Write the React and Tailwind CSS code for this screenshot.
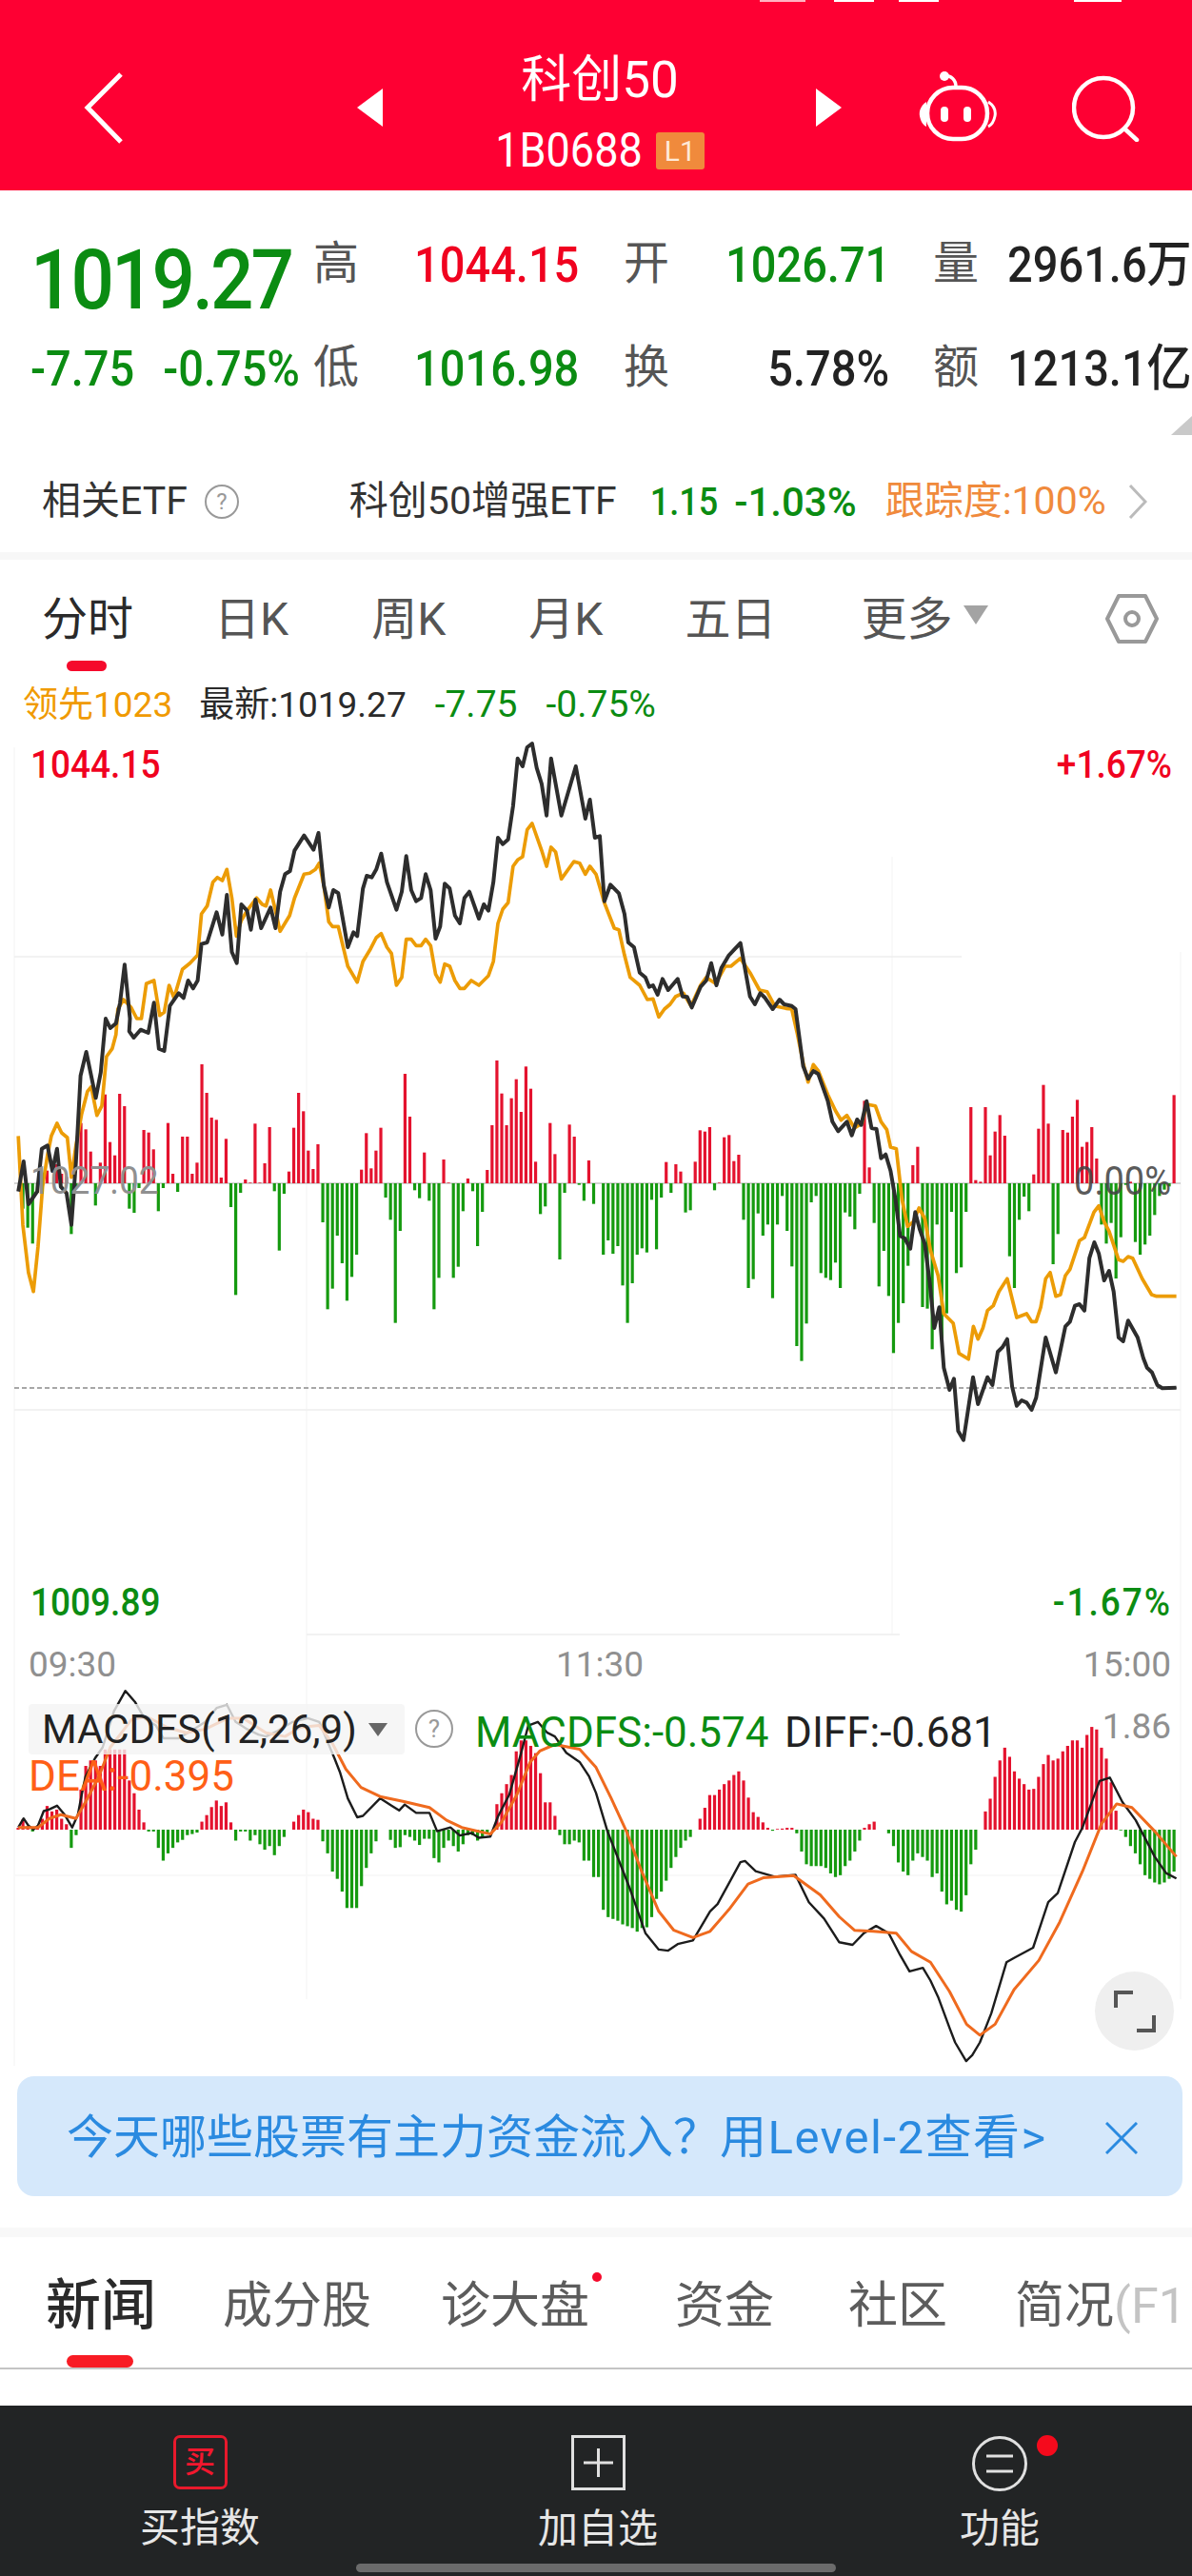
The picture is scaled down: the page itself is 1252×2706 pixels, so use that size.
const vol = [
  0, -80, -140, -190, -30, 5, 40, 0, 60, 30,
  20, -160, -10, 190, 170, 100, -70, 65, 280, 130,
  88, 282, 243, -80, -93, -15, 168, 160, 107, -88,
  -15, 190, 30, -27, 147, 147, 30, 65, 375, 285,
  207, 200, 18, 140, -75, -352, -30, 12, 2, 188,
  2, 63, 177, -25, -212, -33, 37, 175, 285, 227,
  103, 45, 123, -123, -397, -332, -165, -252, -370, -295,
  -225, 43, 158, 47, 103, 175, -45, -115, -440, -150,
  345, 210, -22, -47, 97, -55, -397, -298, 75, 2,
  -298, -263, -88, 15, -25, -198, -90, 42, 183, 387,
  283, 183, 268, 328, 225, 368, 298, 68, -97, -73,
  190, 92, -240, -30, 185, 147, -5, -55, 72, -65,
  0, -225, -180, -222, -198, -322, -440, -315, -225, -205,
  -218, -52, -208, -45, 67, -30, 60, 37, -92, -85,
  68, 167, 163, 177, -22, 2, 145, 152, 70, 90,
  -115, -330, -302, -95, -165, -130, -362, -130, -40, -150,
  -262, -513, -560, -442, -60, -40, -283, -298, -305, -250,
  -330, -92, -105, -145, -33, 260, 50, -125, -325, -213,
  -355, -535, -440, -378, -260, 57, 115, -390, -395, -523,
  -130, -490, -410, -90, -283, -265, -90, 240, 10, 5,
  240, 88, 163, 215, 150, -230, -330, -115, -42, -88,
  28, 172, 310, 188, -255, -160, 168, 160, 210, 263,
  115, 130, 177, 78, -130, -190, -125, -300, -170, -5,
  5, -185, -225, -193, -165, -100, -40, -20, -10, 278,
];

const macd = [
  5, 28, 10, -5, 5, 30, 65, 50, 55, 30,
  15, -50, -15, 110, 175, 190, 190, 175, 220, 220,
  220, 220, 220, 135, 100, 55, 20, -5, -5, -50,
  -85, -65, -50, -35, -28, -15, -12, -8, 22, 40,
  62, 80, 65, 75, 20, -30, -5, -5, -30, -15,
  -40, -55, -45, -70, -45, -20, 0, 22, 40, 55,
  48, 30, 27, -32, -65, -115, -135, -170, -215, -215,
  -215, -155, -105, -65, -32, 0, 0, -28, -50, -48,
  -15, -20, -30, -42, -25, -25, -78, -90, -50, -30,
  -45, -60, -40, -15, -15, -30, -20, -10, 0, 70,
  100, 125, 150, 215, 245, 245, 230, 210, 155, 75,
  75, 38, -15, -40, -40, -30, -35, -85, -85, -130,
  -130, -220, -240, -245, -250, -260, -265, -270, -280, -270,
  -268, -240, -190, -170, -140, -105, -75, -50, -30, -20,
  0, 30, 60, 95, 95, 110, 125, 135, 150, 160,
  135, 88, 48, 35, 20, 5, -3, 2, 3, 5,
  5, -10, -60, -95, -100, -100, -100, -105, -120, -130,
  -125, -100, -85, -60, -30, 5, 15, 22, 0, 0,
  -10, -45, -90, -115, -125, -85, -65, -75, -85, -130,
  -120, -170, -205, -195, -220, -225, -180, -95, -55, 0,
  50, 85, 145, 190, 225, 200, 160, 140, 125, 110,
  112, 145, 180, 205, 190, 195, 215, 230, 245, 245,
  225, 260, 282, 275, 225, 195, 130, 52, -2, -20,
  -45, -65, -95, -125, -135, -145, -150, -145, -135, -115,
];

// traced from crops: x scale 2.505, y scale 3 (price) or 2.613 (macd)
const price = (list, left, top) => list.map(([x, y]) => `${(x / 2.505 + left).toFixed(1)},${(y / 3 + top).toFixed(1)}`).join(" ");
const lower = (list, left) => list.map(([x, y]) => `${(x / 2.505 + left).toFixed(1)},${(y / 2.613 + 1560).toFixed(1)}`).join(" ");

const blackLine = [
  price([[48, 575], [62, 480], [75, 615], [98, 575], [110, 440], [125, 430], [138, 510], [150, 440], [160, 560], [175, 580], [188, 680], [200, 480], [212, 210], [227, 135], [252, 280], [265, 200], [278, 30], [290, 60], [305, 45], [316, -20]], 0, 1060),
  price([[328, 1360], [342, 1530], [340, 1570], [352, 1590], [370, 1565], [390, 1575], [405, 1480], [418, 1625], [432, 1632], [447, 1490], [470, 1450], [483, 1465], [495, 1410], [508, 1435], [520, 1410], [530, 1295], [545, 1290], [570, 1195], [585, 1265], [597, 1140], [610, 1320], [623, 1355], [635, 1170], [650, 1190], [660, 1250], [672, 1155], [687, 1245], [712, 1180], [725, 1245], [737, 1130], [750, 1075], [763, 1065], [775, 1000], [800, 953], [825, 998], [838, 945], [852, 1110], [865, 1180], [877, 1125], [890, 1135], [915, 1305], [930, 1258], [940, 1270], [955, 1120], [965, 1080], [978, 1085], [990, 1060], [1003, 1010], [1018, 1100], [1043, 1187], [1057, 1130], [1069, 1018], [1082, 1125], [1095, 1160], [1108, 1150], [1120, 1075], [1133, 1125], [1146, 1278], [1158, 1240], [1170, 1105], [1183, 1120], [1197, 1205], [1210, 1230], [1222, 1150], [1235, 1130], [1260, 1215], [1273, 1170], [1285, 1190], [1298, 1100], [1310, 960], [1323, 980], [1337, 965], [1350, 860], [1362, 710], [1375, 735], [1387, 675], [1400, 663], [1412, 740], [1425, 790], [1438, 890], [1450, 710], [1477, 890], [1515, 735], [1540, 900], [1552, 840], [1565, 960]], 0, 560),
  price([[10, 955], [22, 1160], [38, 1108], [60, 1135], [75, 1200], [85, 1290], [100, 1305], [115, 1385], [130, 1400], [140, 1430], [150, 1425], [162, 1455], [175, 1405], [190, 1440], [215, 1405], [228, 1460], [240, 1462], [252, 1495], [275, 1430], [290, 1410], [303, 1355], [317, 1425], [330, 1370], [350, 1330], [380, 1292], [405, 1460], [418, 1485], [432, 1450], [445, 1465], [465, 1500], [483, 1470], [495, 1485], [515, 1490], [525, 1500]], 626, 560),
  price([[545, 180], [558, 220], [572, 195], [585, 205], [610, 290], [622, 355], [637, 385], [660, 355], [673, 398], [687, 348], [698, 365], [712, 290], [725, 375], [738, 378], [750, 470], [762, 458], [775, 510], [788, 600], [800, 715], [812, 722], [827, 755], [840, 640], [852, 695], [865, 740], [878, 860], [890, 1005], [903, 940], [915, 1130], [930, 1200], [942, 1165], [953, 1330], [967, 1358], [992, 1160], [1005, 1245], [1030, 1160], [1043, 1185], [1057, 1080], [1070, 1065], [1082, 1040], [1095, 1190], [1107, 1250], [1120, 1233], [1133, 1240], [1146, 1263], [1158, 1225], [1183, 1035], [1210, 1145], [1235, 1000], [1247, 985], [1260, 935], [1272, 930], [1285, 950], [1298, 785], [1311, 735], [1323, 770], [1337, 855], [1350, 825], [1362, 890], [1375, 1035], [1387, 1047], [1400, 982], [1425, 1035], [1440, 1100], [1450, 1130], [1463, 1145], [1477, 1185], [1490, 1195], [1527, 1193]], 626, 1060),
].join(" ");

const orangeLine = [
  price([[48, 400], [60, 680], [75, 830], [88, 890], [100, 750], [112, 560], [125, 460], [135, 400], [150, 360], [162, 390], [177, 405], [188, 530], [200, 430], [215, 330], [230, 260], [240, 245], [255, 335], [268, 305], [280, 150], [295, 125], [305, 80], [310, 0], [325, -30], [345, -5], [360, 30], [372, 30], [385, -80], [405, -90], [420, 20], [432, 10]], 0, 1060),
  price([[445, 1425], [458, 1465], [480, 1375], [500, 1355], [520, 1330], [530, 1200], [545, 1175], [560, 1100], [572, 1085], [585, 1095], [597, 1060], [610, 1150], [622, 1270], [635, 1220], [650, 1190], [675, 1150], [690, 1170], [700, 1175], [712, 1125], [725, 1190], [737, 1255], [762, 1205], [775, 1150], [800, 1075], [815, 1072], [830, 1060], [840, 1040], [852, 1110], [865, 1225], [875, 1240], [890, 1240], [915, 1365], [940, 1415], [955, 1350], [975, 1310], [990, 1275], [1003, 1262], [1018, 1305], [1030, 1325], [1043, 1425], [1057, 1400], [1069, 1280], [1082, 1280], [1095, 1300], [1108, 1300], [1120, 1280], [1133, 1300], [1146, 1390], [1158, 1415], [1170, 1358], [1183, 1365], [1197, 1410], [1210, 1435], [1222, 1435], [1240, 1410], [1260, 1425], [1285, 1395], [1298, 1350], [1310, 1230], [1323, 1185], [1337, 1165], [1350, 1050], [1362, 1030], [1375, 1020], [1387, 935], [1400, 915], [1425, 1000], [1438, 1050], [1450, 990], [1462, 1005], [1477, 1090], [1510, 1035], [1525, 1040], [1540, 1075], [1552, 1050]], 0, 560),
  price([[0, 1075], [22, 1165], [48, 1245], [60, 1250], [75, 1330], [90, 1400], [115, 1425], [135, 1470], [150, 1468], [165, 1525], [180, 1500], [195, 1485], [210, 1460], [230, 1450], [250, 1490], [275, 1425], [290, 1400], [315, 1420], [340, 1365], [355, 1365], [380, 1340], [405, 1385], [430, 1440], [450, 1445], [470, 1490], [500, 1498], [515, 1500]], 626, 560),
  price([[530, 80], [545, 170], [558, 230], [572, 175], [585, 195], [610, 270], [630, 320], [645, 350], [660, 335], [680, 375], [700, 360], [712, 300], [735, 305], [750, 355], [765, 380], [775, 435], [790, 440], [805, 600], [820, 685], [835, 670], [850, 627], [865, 660], [880, 760], [900, 840], [915, 960], [940, 990], [955, 1085], [980, 1103], [993, 1000], [1005, 1040], [1018, 1005], [1030, 950], [1045, 935], [1060, 890], [1082, 850], [1107, 972], [1133, 960], [1146, 985], [1158, 985], [1170, 940], [1183, 850], [1195, 830], [1210, 905], [1222, 900], [1235, 840], [1247, 820], [1272, 730], [1285, 720], [1310, 640], [1323, 620], [1337, 670], [1350, 700], [1375, 790], [1387, 795], [1400, 780], [1412, 785], [1437, 850], [1462, 900], [1475, 905], [1527, 905]], 626, 1060),
].join(" ");

const diffLine = [
  lower([[48, 940], [62, 915], [75, 935], [88, 945], [100, 935], [115, 895], [130, 890], [150, 880], [170, 905], [190, 940], [205, 905], [215, 850], [225, 800], [250, 750], [270, 720], [300, 620], [330, 565], [355, 595], [380, 640], [410, 660], [430, 695], [470, 695], [510, 670], [540, 650], [570, 612], [597, 603], [620, 650], [650, 670], [680, 685], [700, 690], [730, 675], [770, 650], [810, 640], [840, 650], [860, 700], [880, 750], [895, 790], [915, 860], [940, 912], [955, 908], [1000, 860], [1030, 880], [1050, 893], [1065, 877], [1095, 900], [1130, 900], [1150, 950], [1185, 940], [1210, 962], [1240, 955], [1260, 968], [1290, 965], [1310, 910], [1340, 850], [1370, 740], [1390, 660], [1415, 650], [1440, 680], [1460, 690], [1490, 735], [1525, 760], [1550, 800]], 0),
  lower([[0, 845], [30, 950], [60, 1030], [90, 1110], [130, 1230], [165, 1275], [190, 1278], [215, 1260], [255, 1250], [300, 1170], [320, 1150], [380, 1035], [392, 1032], [420, 1060], [470, 1075], [525, 1070], [560, 1145], [600, 1190], [640, 1255], [675, 1262], [705, 1230], [737, 1210], [770, 1230], [800, 1290], [825, 1335], [860, 1325], [880, 1360], [900, 1405], [930, 1490], [945, 1530], [974, 1581], [990, 1565], [1010, 1530], [1040, 1450], [1080, 1310], [1100, 1298], [1150, 1270], [1190, 1145], [1215, 1120], [1260, 980], [1280, 940], [1325, 812], [1352, 803], [1385, 870], [1420, 920], [1470, 1020], [1500, 1065], [1527, 1080]], 626),
].join(" ");

const deaLine = [
  lower([[48, 940], [100, 940], [130, 915], [160, 905], [200, 915], [225, 870], [260, 800], [290, 720], [320, 680], [345, 645], [385, 635], [440, 665], [490, 680], [540, 670], [600, 640], [640, 640], [700, 680], [750, 690], [790, 665], [840, 660], [875, 710], [910, 780], [950, 830], [1000, 855], [1060, 868], [1130, 885], [1175, 920], [1215, 940], [1290, 958], [1320, 925], [1360, 850], [1395, 760], [1420, 730], [1460, 712], [1525, 725]], 0),
  lower([[0, 775], [40, 860], [80, 950], [120, 1060], [165, 1170], [205, 1222], [255, 1242], [300, 1225], [350, 1165], [400, 1095], [440, 1078], [520, 1072], [590, 1125], [640, 1185], [680, 1222], [730, 1225], [790, 1230], [830, 1280], [880, 1310], [930, 1390], [975, 1480], [1010, 1510], [1050, 1480], [1100, 1385], [1165, 1305], [1220, 1200], [1280, 1060], [1330, 930], [1370, 875], [1410, 885], [1470, 950], [1527, 1020]], 626),
].join(" ");

function Chart() {
  return (
    <svg viewBox="0 775 1252 1406" className="block w-full h-full">
      <g stroke="#f7f7f7" strokeWidth="1.5">
        <line x1="15" y1="785" x2="15" y2="2170" />
        <line x1="322" y1="1000" x2="322" y2="2100" />
        <line x1="937" y1="900" x2="937" y2="1717" />
        <line x1="1240" y1="1000" x2="1240" y2="2100" />
        <line x1="15" y1="1005" x2="1010" y2="1005" stroke="#eeeeee" />
        <line x1="15" y1="1481" x2="1240" y2="1481" stroke="#eeeeee" />
        <line x1="322" y1="1717" x2="945" y2="1717" stroke="#eeeeee" />
        <line x1="15" y1="1970" x2="1240" y2="1970" />
      </g>
      <line x1="15" y1="1243" x2="1240" y2="1243" stroke="#aaaaaa" strokeWidth="1" />
      <line x1="15" y1="1458" x2="1236" y2="1458" stroke="#8a8a8a" strokeWidth="1.5" strokeDasharray="5 3" />
      {vol.map((v, i) => (
        <rect key={i} x={17.4 + i * 5.08} y={v > 0 ? 1243 - v / 3 : 1243} width="3.2" height={Math.abs(v) / 3} fill={v > 0 ? "#e4122e" : "#159a0f"} />
      ))}
      <polyline points={orangeLine} fill="none" stroke="#ec9c06" strokeWidth="3.7" strokeLinejoin="round" />
      <polyline points={blackLine} fill="none" stroke="#2d2d2d" strokeWidth="4" strokeLinejoin="round" />
      {macd.map((v, i) => (
        <rect key={i} x={17.4 + i * 5.08} y={v > 0 ? 1922 - v / 2.613 : 1922} width="3.2" height={Math.abs(v) / 2.613} fill={v > 0 ? "#e4122e" : "#159a0f"} />
      ))}
      <polyline points={diffLine} fill="none" stroke="#1c1c1c" strokeWidth="2.4" strokeLinejoin="round" />
      <polyline points={deaLine} fill="none" stroke="#ef6a1e" strokeWidth="3" strokeLinejoin="round" />
    </svg>
  );
}

const green = "text-[#0b8c12]";
const red = "text-[#f0021f]";
const label = "text-[48px] leading-none text-[#555555]";
const num = "text-[47px] leading-none font-medium scale-y-[1.12]";
const axis = "absolute text-[37px] leading-none font-medium scale-y-[1.1]";

export default function App() {
  return (
    <div className="w-[1252px] h-[2706px] overflow-hidden bg-white flex flex-col [font-family:Roboto,'Noto_Sans_CJK_SC',sans-serif]">
      <header className="relative h-[200px] bg-[#fe0033] pt-[26px] flex items-center text-white">
        <div className="absolute top-0 left-[798px] flex gap-[30px]">
          <div className="w-[48px] h-[2px] bg-white/70" />
          <div className="w-[42px] h-[2px] bg-white" />
          <div className="w-[42px] h-[2px] bg-white ml-[-4px]" />
          <div className="w-[50px] h-[2px] bg-white ml-[112px]" />
        </div>
        <svg width="42" height="75" viewBox="0 0 42 75" fill="none" className="ml-[88px]">
          <polyline points="39,2 4,37 39,73" stroke="white" strokeWidth="5" />
        </svg>
        <svg width="27" height="40" viewBox="0 0 27 40" className="ml-[245px]">
          <polygon points="27,0 27,40 0,20" fill="white" />
        </svg>
        <div className="w-[300px] ml-[78px] mt-[10px] flex flex-col items-center">
          <div className="text-[53px] leading-[56px]">科创50</div>
          <div className="flex items-center gap-[14px] mt-[24px]">
            <span className="text-[45px] leading-[44px] scale-y-[1.1]">1B0688</span>
            <span className="w-[51px] h-[39px] rounded-[3px] bg-[#f08a3c] text-[30px] leading-[39px] text-center text-[#ffe9d8]">L1</span>
          </div>
        </div>
        <svg width="27" height="40" viewBox="0 0 27 40" className="ml-[77px]">
          <polygon points="0,0 27,20 0,40" fill="white" />
        </svg>
        <svg width="82" height="74" viewBox="0 0 82 74" fill="none" className="ml-[81px] mb-[2px]">
          <circle cx="27" cy="5" r="5" fill="white" />
          <path d="M27 5C34 4 39 9 39 16" stroke="white" strokeWidth="3.5" />
          <rect x="9" y="17" width="63" height="54" rx="27" stroke="white" strokeWidth="4.5" />
          <path d="M8 32C2 36 0 42 1 47C2 52 4 56 8 58Z" fill="white" />
          <path d="M73 32C79 36 81 42 80 47C79 52 77 56 73 58" stroke="white" strokeWidth="3" />
          <rect x="23" y="37" width="8" height="16" rx="4" fill="white" />
          <rect x="47" y="37" width="8" height="16" rx="4" fill="white" />
        </svg>
        <svg width="72" height="72" viewBox="0 0 72 72" fill="none" className="ml-[79px]">
          <circle cx="33" cy="36" r="31" stroke="white" strokeWidth="4.5" />
          <line x1="55" y1="58" x2="68" y2="70" stroke="white" strokeWidth="4.5" strokeLinecap="round" />
        </svg>
      </header>

      <section className="relative h-[270px] pt-[50px] flex flex-col gap-[55px]">
        <div className="h-[54px] grid grid-rows-[54px] grid-cols-[329px_106px_220px_107px_218px_78px_1fr] items-center whitespace-nowrap">
          <div className={`pl-[32px] self-start mt-[5px] text-[80px] leading-none font-medium tracking-[-3px] scale-y-[1.08] ${green}`}>1019.27</div>
          <div className={label}>高</div>
          <div className={`${num} ${red}`}>1044.15</div>
          <div className={label}>开</div>
          <div className={`${num} ${green}`}>1026.71</div>
          <div className={label}>量</div>
          <div className={`${num} text-[#222222]`}>2961.6万</div>
        </div>
        <div className="h-[54px] grid grid-rows-[54px] grid-cols-[329px_106px_220px_107px_172px_46px_78px_1fr] items-center whitespace-nowrap">
          <div className={`pl-[32px] flex gap-[30px] ${num} text-[45px] ${green}`}>
            <span>-7.75</span>
            <span>-0.75%</span>
          </div>
          <div className={label}>低</div>
          <div className={`${num} ${green}`}>1016.98</div>
          <div className={label}>换</div>
          <div className={`${num} text-right text-[#222222]`}>5.78%</div>
          <div />
          <div className={label}>额</div>
          <div className={`${num} text-[#222222]`}>1213.1亿</div>
        </div>
        <svg width="22" height="20" viewBox="0 0 22 20" className="absolute right-0 top-[237px]">
          <polygon points="22,0 22,20 0,20" fill="#c9c9c9" />
        </svg>
      </section>

      <div className="h-[110px] pt-[4px] pl-[44px] flex items-center whitespace-nowrap text-[41px] text-[#333333]">
        <span>相关ETF</span>
        <span className="ml-[18px] w-[36px] h-[36px] rounded-full border-2 border-[#999999] text-[24px] leading-[32px] text-center text-[#999999]">?</span>
        <span className="ml-[116px]">科创50增强ETF</span>
        <span className={`ml-[35px] text-[36px] font-medium scale-y-[1.15] ${green}`}>1.15</span>
        <span className={`ml-[17px] text-[42px] font-medium ${green}`}>-1.03%</span>
        <span className="ml-[30px] text-[#f08a3c]">跟踪度:100%</span>
        <svg width="20" height="36" viewBox="0 0 20 36" fill="none" className="ml-[23px]">
          <polyline points="2,1 18,18 2,35" stroke="#bbbbbb" strokeWidth="3" />
        </svg>
      </div>

      <div className="h-[8px] bg-[#f7f7f7]" />

      <nav className="relative h-[117px] pl-[44px] pt-[8px] flex items-center whitespace-nowrap text-[48px] text-[#555555]">
        <span className="text-[#2a2a2a]">分时</span>
        <span className="ml-[85px]">日K</span>
        <span className="ml-[87px]">周K</span>
        <span className="ml-[87px]">月K</span>
        <span className="ml-[86px]">五日</span>
        <span className="ml-[89px]">更多</span>
        <svg width="26" height="20" viewBox="0 0 26 20" className="ml-[12px] mb-[10px]">
          <polygon points="0,0 26,0 13,20" fill="#a3a3a3" />
        </svg>
        <svg width="56" height="52" viewBox="0 0 56 52" fill="none" className="ml-[123px] mb-[2px]">
          <polygon points="14,2 42,2 54,26 42,50 14,50 2,26" stroke="#999999" strokeWidth="4" strokeLinejoin="round" />
          <circle cx="28" cy="26" r="7" stroke="#999999" strokeWidth="4" />
        </svg>
        <div className="absolute left-[70px] bottom-0 w-[42px] h-[11px] rounded-full bg-[#f50a2c]" />
      </nav>

      <div className="h-[70px] pl-[24px] flex items-center whitespace-nowrap text-[37px] leading-none">
        <span className="text-[#f09a00]">领先1023</span>
        <span className="ml-[28px] text-[#2a2a2a]">最新:1019.27</span>
        <span className={`ml-[30px] text-[39px] ${green}`}>-7.75</span>
        <span className={`ml-[30px] text-[39px] ${green}`}>-0.75%</span>
      </div>

      <div className="relative h-[1406px]">
        <Chart />
        <div className={`${axis} left-[32px] top-[10px] ${red}`}>1044.15</div>
        <div className={`${axis} right-[21px] top-[10px] ${red}`}>+1.67%</div>
        <div className="absolute left-[32px] top-[447px] text-[37px] leading-none scale-y-[1.1] text-[#909090]">1027.02</div>
        <div className="absolute right-[22px] top-[447px] text-[38px] leading-none scale-y-[1.1] text-[#444444]/90">0.00%</div>
        <div className={`${axis} left-[32px] top-[890px] ${green}`}>1009.89</div>
        <div className={`${axis} right-[21px] top-[890px] tracking-[2px] ${green}`}>-1.67%</div>
        <div className="absolute left-[30px] top-[955px] text-[37px] leading-none text-[#909090]">09:30</div>
        <div className="absolute left-[584px] top-[955px] text-[37px] leading-none text-[#909090]">11:30</div>
        <div className="absolute right-[22px] top-[955px] text-[37px] leading-none text-[#909090]">15:00</div>
        <div className="absolute left-[30px] top-[1015px] w-[395px] h-[53px] rounded-[4px] bg-[#f4f4f4]/80 pl-[14px] flex items-center text-[42px] leading-none text-[#222222]">
          <span>MACDFS(12,26,9)</span>
          <svg width="20" height="14" viewBox="0 0 20 14" className="ml-[12px]">
            <polygon points="0,0 20,0 10,14" fill="#666666" />
          </svg>
        </div>
        <div className="absolute left-[436px] top-[1021px] w-[40px] h-[40px] rounded-full border-2 border-[#999999] text-[26px] leading-[36px] text-center text-[#999999]">?</div>
        <div className={`absolute left-[499px] top-[1023px] text-[44px] leading-none ${green}`}>MACDFS:-0.574</div>
        <div className="absolute left-[824px] top-[1023px] text-[44px] leading-none text-[#222222]">DIFF:-0.681</div>
        <div className="absolute right-[22px] top-[1020px] text-[37px] leading-none text-[#909090]">1.86</div>
        <div className="absolute left-[30px] top-[1069px] text-[44px] leading-none text-[#ff5f17]">DEA:-0.395</div>
        <div className="absolute left-[1150px] top-[1296px] w-[83px] h-[83px] rounded-full bg-[#efefef] flex items-center justify-center">
          <svg width="44" height="44" viewBox="0 0 44 44" fill="none">
            <polyline points="2,18 2,2 20,2" stroke="#555555" strokeWidth="4" />
            <polyline points="24,42 42,42 42,26" stroke="#555555" strokeWidth="4" />
          </svg>
        </div>
      </div>

      <div className="ml-[18px] mr-[10px] h-[126px] rounded-[18px] bg-[#d5e8fb] pl-[52px] pt-[4px] flex items-center whitespace-nowrap text-[49px] text-[#2a8ae0]">
        <span>今天哪些股票有主力资金流入？</span>
        <span className="tracking-[1.5px]">用Level-2查看&gt;</span>
        <svg width="34" height="34" viewBox="0 0 34 34" fill="none" className="ml-auto mr-[47px]">
          <line x1="1" y1="1" x2="33" y2="33" stroke="#2a8ae0" strokeWidth="3" />
          <line x1="33" y1="1" x2="1" y2="33" stroke="#2a8ae0" strokeWidth="3" />
        </svg>
      </div>

      <div className="mt-[33px] h-[10px] bg-[#f8f8f8]" />

      <div className="relative h-[139px] border-b-2 border-[#c4c4c4] pl-[48px] pt-[8px] flex items-center whitespace-nowrap text-[52px] text-[#5c5c5c] overflow-hidden">
        <span className="text-[58px] font-medium text-[#2a2a2a]">新闻</span>
        <span className="ml-[70px]">成分股</span>
        <span className="relative ml-[73px]">
          诊大盘
          <span className="absolute -right-[13px] top-[3px] w-[10px] h-[10px] rounded-full bg-[#f50a2c]" />
        </span>
        <span className="ml-[90px]">资金</span>
        <span className="ml-[78px]">社区</span>
        <span className="ml-[71px]">简况<span className="text-[#c4c4c4]">(F1</span></span>
        <div className="absolute left-[70px] bottom-0 w-[70px] h-[13px] rounded-full bg-[#f81c24]" />
      </div>

      <div className="h-[38px] bg-white" />

      <footer className="flex-1 bg-[#222425] flex flex-col text-[42px] leading-[46px] text-[#e6e6e6]">
        <div className="flex pt-[31px]">
          <div className="w-[420px] flex flex-col items-center gap-[18px]">
            <div className="w-[57px] h-[57px] rounded-[7px] border-[3px] border-[#e8192c] text-[32px] leading-[50px] text-center font-medium text-[#f2172e]">买</div>
            <span>买指数</span>
          </div>
          <div className="w-[416px] flex flex-col items-center gap-[18px]">
            <svg width="57" height="58" viewBox="0 0 57 58" fill="none">
              <rect x="1.5" y="1.5" width="54" height="55" stroke="#e0e0e0" strokeWidth="3" />
              <line x1="28.5" y1="14" x2="28.5" y2="44" stroke="#e0e0e0" strokeWidth="3" />
              <line x1="13" y1="29" x2="44" y2="29" stroke="#e0e0e0" strokeWidth="3" />
            </svg>
            <span>加自选</span>
          </div>
          <div className="w-[416px] pl-[12px] flex flex-col items-center gap-[16px]">
            <div className="relative">
              <svg width="58" height="60" viewBox="0 0 58 60" fill="none">
                <circle cx="29" cy="30" r="27.5" stroke="#e0e0e0" strokeWidth="3" />
                <line x1="15" y1="22" x2="43" y2="22" stroke="#e0e0e0" strokeWidth="3" />
                <line x1="15" y1="38" x2="43" y2="38" stroke="#e0e0e0" strokeWidth="3" />
              </svg>
              <span className="absolute -right-[32px] top-0 w-[22px] h-[22px] rounded-full bg-[#f50a1c]" />
            </div>
            <span>功能</span>
          </div>
        </div>
        <div className="mt-[13px] mx-auto w-[504px] h-[9px] rounded-full bg-[#6b6b6b]" />
      </footer>
    </div>
  );
}
